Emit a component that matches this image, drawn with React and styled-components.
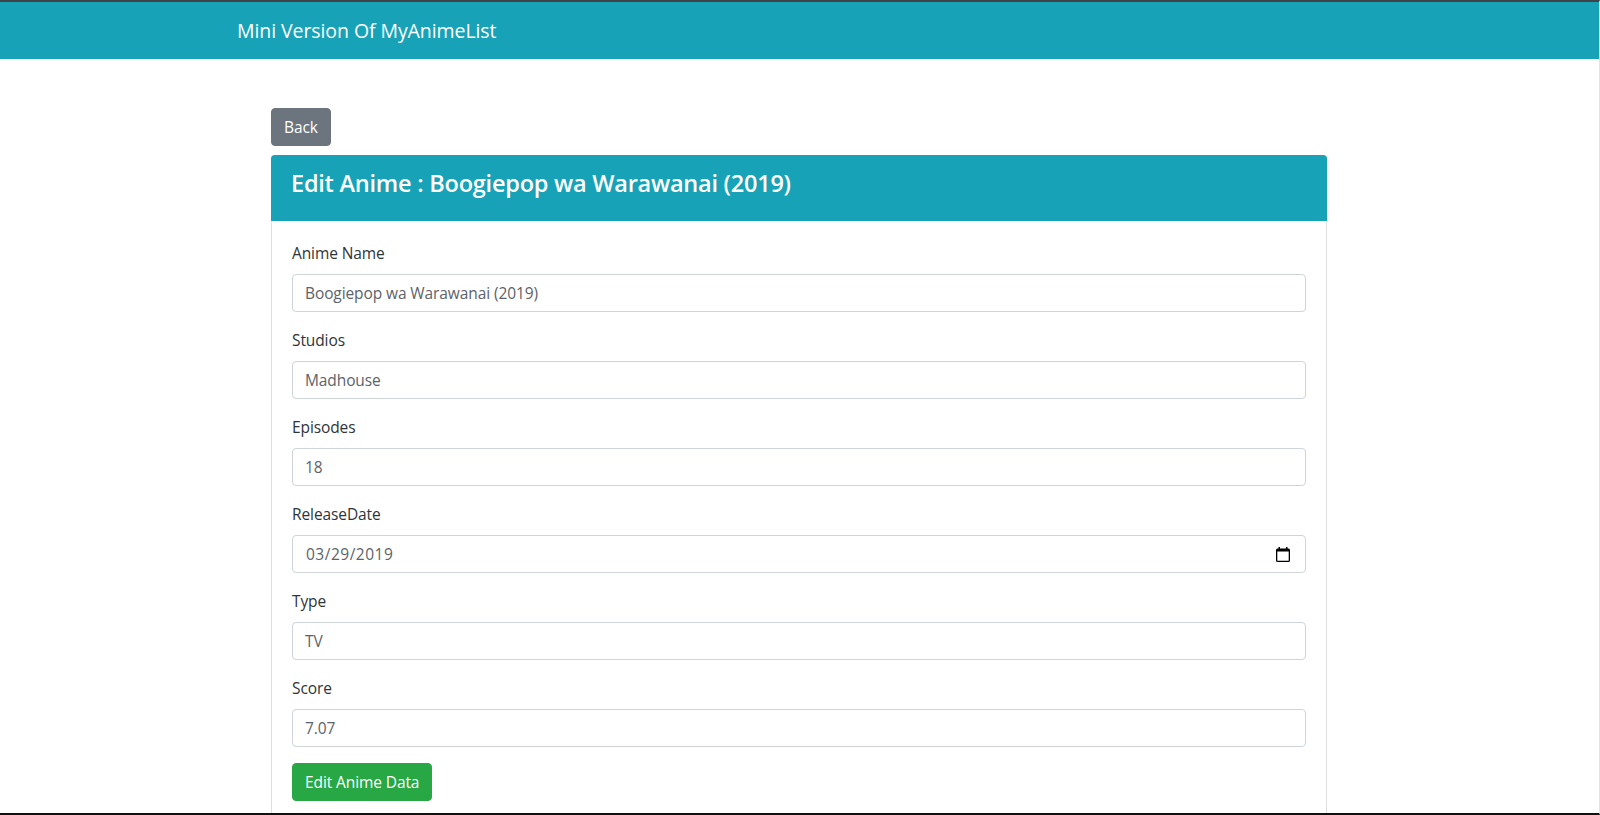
import styled, { createGlobalStyle } from "styled-components";

const GlobalStyle = createGlobalStyle`
  * {
    box-sizing: border-box;
  }
  body {
    margin: 0;
    background: #fff;
    font-family: "Open Sans", "Noto Sans", sans-serif;
    color: #2f3438;
  }
`;

const Frame = styled.div`
  height: 815px;
  overflow: hidden;
  display: flex;
  flex-direction: column;
  border-top: 2px solid #3f4448;
  border-bottom: 2px solid #111;
  border-right: 1px solid #e4e4e4;
`;

const Navbar = styled.nav`
  flex: none;
  height: 57px;
  padding-left: 237px;
  display: flex;
  align-items: center;
  background: #17a2b8;
  color: #fff;
  font-size: 19.5px;
  letter-spacing: -0.08px;
`;

const Main = styled.main`
  width: 1057px;
  padding-right: 1px;
  margin: 49px auto 0;
  display: flex;
  flex-direction: column;
  align-items: flex-start;
`;

const Button = styled.button`
  height: 38px;
  padding: 0 12px;
  border: 1px solid ${(props) => props.color};
  border-radius: 4px;
  background: ${(props) => props.color};
  color: #fff;
  font-family: inherit;
  font-size: 15.5px;
  letter-spacing: -0.1px;
`;

const Card = styled.section`
  width: 100%;
  margin-top: 9px;
  border: 1px solid #dfdfdf;
  border-bottom: 0;
  border-radius: 4px 4px 0 0;
`;

const CardHeader = styled.h3`
  height: 66px;
  margin: -1px -1px 0;
  padding: 0 20px 10px;
  display: flex;
  align-items: center;
  background: #17a2b8;
  border-radius: 4px 4px 0 0;
  color: #fff;
  font-size: 23.5px;
  font-weight: 600;
  letter-spacing: -0.23px;
`;

const CardBody = styled.div`
  padding: 20px;
`;

const Field = styled.div`
  margin-bottom: 16px;
`;

const Label = styled.label`
  display: block;
  height: 24px;
  margin-bottom: 9px;
  font-size: 15.5px;
  line-height: 24px;
  letter-spacing: -0.1px;
`;

const InputBox = styled.div`
  height: 38px;
  padding: 0 12px;
  display: flex;
  align-items: center;
  justify-content: space-between;
  border: 1px solid #ced4da;
  border-radius: 4px;
  color: #5c636a;
  font-size: 15.5px;
  letter-spacing: -0.1px;
`;

const DateValue = styled.span`
  margin-left: 1px;
  letter-spacing: 0.5px;
`;

const DateIcon = styled.svg`
  width: 14px;
  height: 15px;
  margin-right: 3px;
  color: #000;
`;

const fields = [
  { label: "Anime Name", value: "Boogiepop wa Warawanai (2019)" },
  { label: "Studios", value: "Madhouse" },
  { label: "Episodes", value: "18" },
  { label: "ReleaseDate", value: "03/29/2019", date: true },
  { label: "Type", value: "TV" },
  { label: "Score", value: "7.07" },
];

export default function App() {
  return (
    <>
      <GlobalStyle />
      <Frame>
        <Navbar>Mini Version Of MyAnimeList</Navbar>
        <Main>
          <Button color="#6c757d">Back</Button>
          <Card>
            <CardHeader>Edit Anime : Boogiepop wa Warawanai (2019)</CardHeader>
            <CardBody>
              {fields.map((field) => (
                <Field key={field.label}>
                  <Label>{field.label}</Label>
                  {field.date ? (
                    <InputBox>
                      <DateValue>{field.value}</DateValue>
                      <DateIcon viewBox="0 0 14 15">
                        <path
                          fill="currentColor"
                          d="M2.500 0h1.500v1.500h6V0h1.500v1.500h1A1.500 1.500 0 0 1 14 3v10.500a1.500 1.500 0 0 1-1.500 1.500h-11A1.500 1.500 0 0 1 0 13.500V3a1.500 1.500 0 0 1 1.500-1.500h1V0zM1.300 4.500v9.200h11.400V4.500H1.300z"
                        />
                      </DateIcon>
                    </InputBox>
                  ) : (
                    <InputBox>{field.value}</InputBox>
                  )}
                </Field>
              ))}
              <Button color="#28a745">Edit Anime Data</Button>
            </CardBody>
          </Card>
        </Main>
      </Frame>
    </>
  );
}
